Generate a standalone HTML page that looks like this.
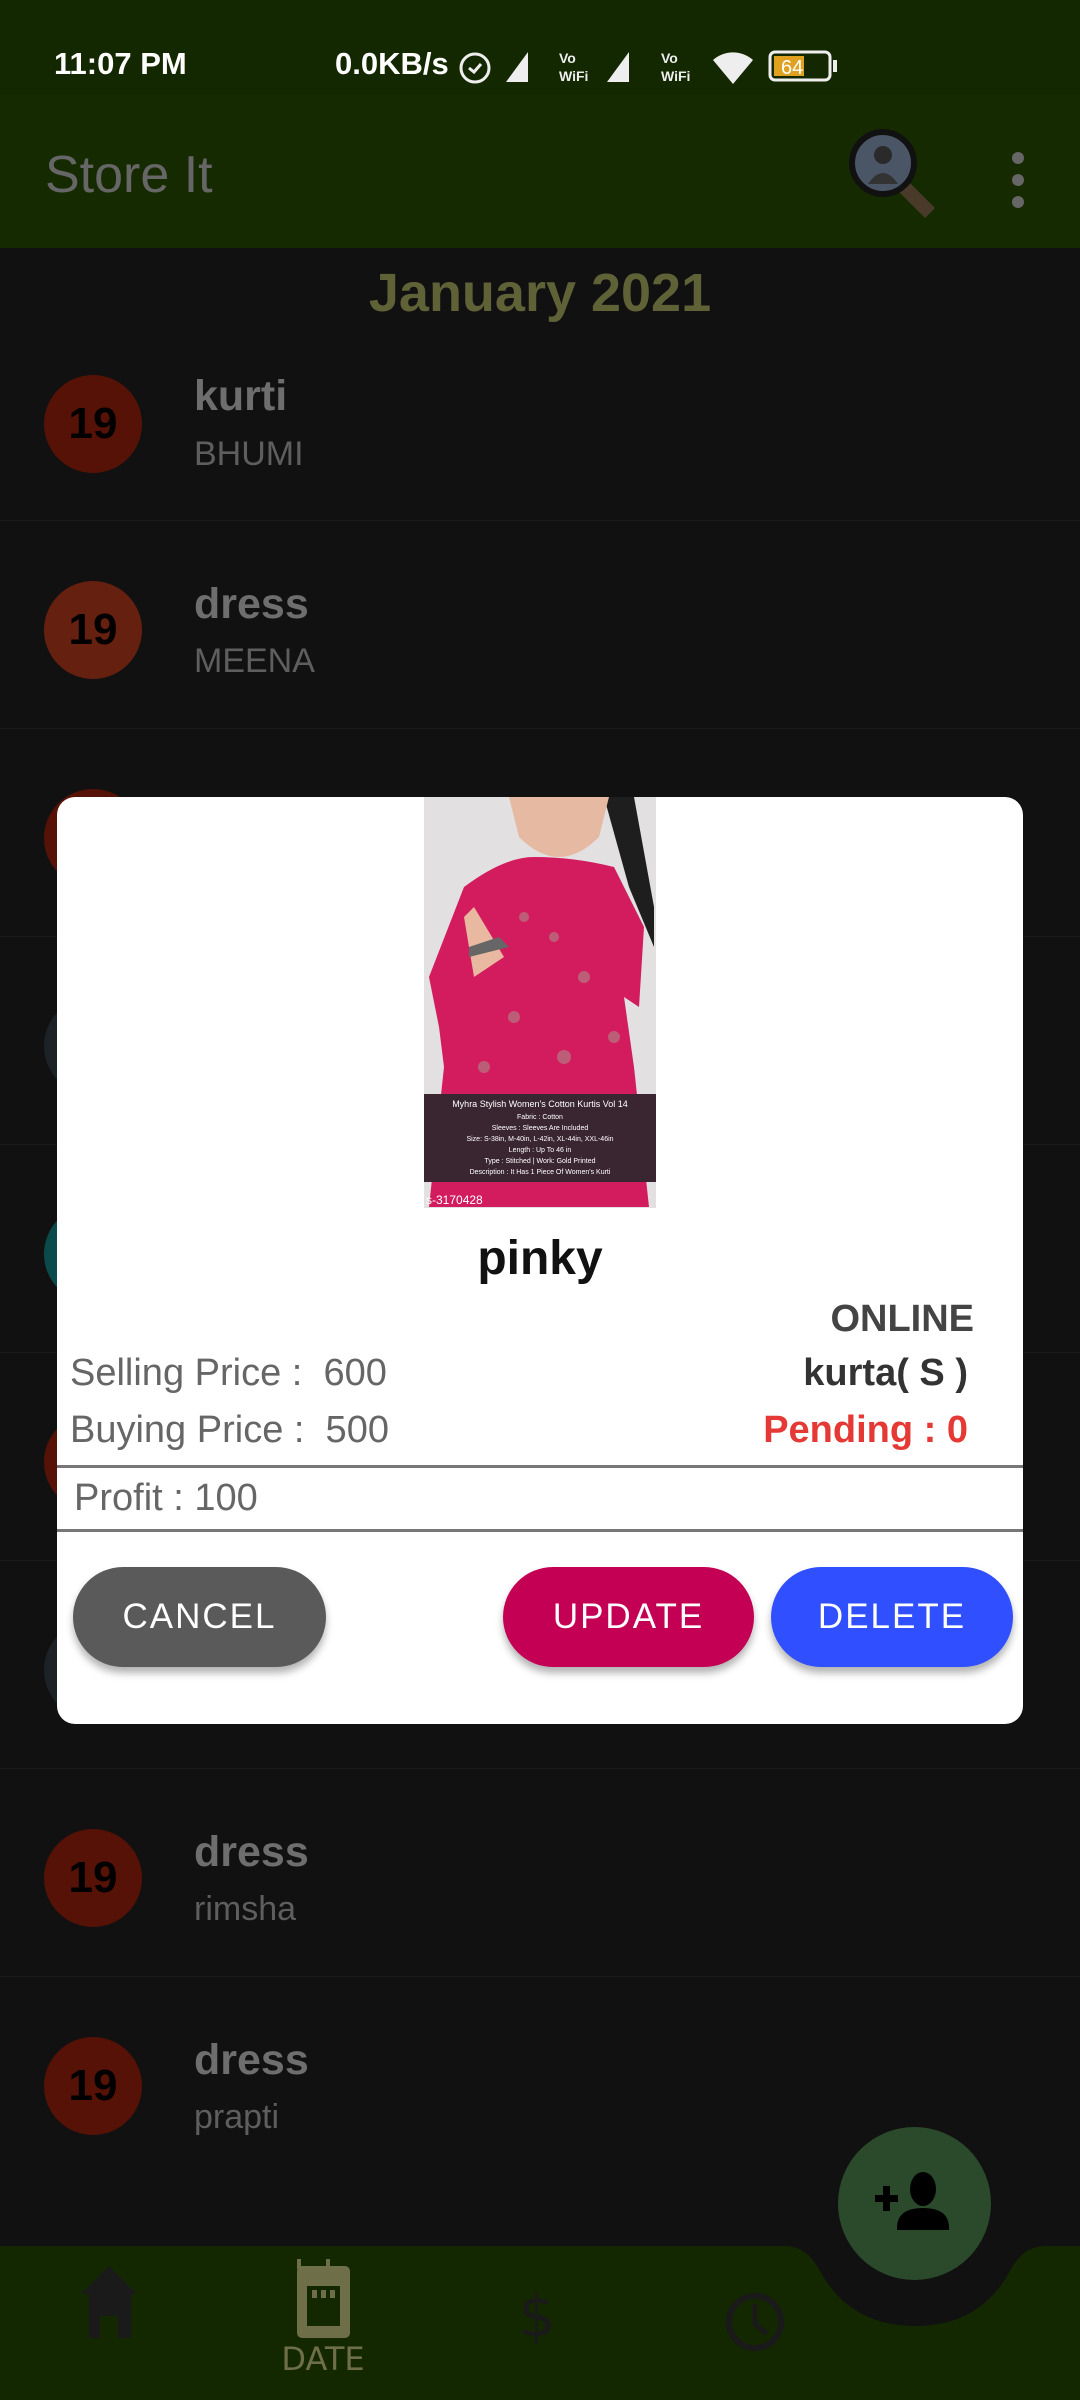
<!DOCTYPE html>
<html><head><meta charset="utf-8"><style>
*{margin:0;padding:0;box-sizing:border-box}
body{width:1080px;height:2400px;background:#111;position:relative;overflow:hidden;font-family:"Liberation Sans",Roboto,sans-serif}
.abs{position:absolute}
.status{left:0;top:0;width:1080px;height:95px;background:#142800}
.appbar{left:0;top:95px;width:1080px;height:153px;background:#162a00}
.circ{position:absolute;left:44px;width:98px;height:98px;border-radius:50%;background:#561206;color:#000;font-size:44px;font-weight:bold;text-align:center;line-height:98px}
.t1{position:absolute;left:194px;font-size:43px;font-weight:bold;color:#6e6e6e}
.t2{position:absolute;left:194px;font-size:34px;color:#5e5e5e}
.sep{position:absolute;left:0;width:1080px;height:1px;background:#1a1a1a}
.dlg{left:57px;top:797px;width:966px;height:927px;background:#fff;border-radius:18px;overflow:hidden}
.btn{position:absolute;top:770px;height:100px;border-radius:50px;color:#fff;font-size:35px;letter-spacing:2px;text-align:center;line-height:100px;box-shadow:0 6px 8px rgba(0,0,0,.3)}
</style></head><body>
<div class="abs status"></div>
<div class="abs" style="left:54px;top:46px;color:#fff;font-size:31px;font-weight:bold">11:07 PM</div>
<div class="abs" style="left:335px;top:46px;color:#fff;font-size:31px;font-weight:bold">0.0KB/s</div>
<svg class="abs" style="left:455px;top:46px" width="390" height="40" viewBox="0 0 390 40">
<circle cx="20" cy="22" r="14" fill="none" stroke="#eee" stroke-width="3"/><path d="M14 22l5 4 7-8" stroke="#eee" stroke-width="3" fill="none"/>
<path d="M51 36h22V6z" fill="#eee"/>
<text x="104" y="17" font-size="14" fill="#eee" font-family="Liberation Sans" font-weight="bold">Vo</text><text x="104" y="35" font-size="14" fill="#eee" font-family="Liberation Sans" font-weight="bold">WiFi</text>
<path d="M152 36h22V6z" fill="#eee"/>
<text x="206" y="17" font-size="14" fill="#eee" font-family="Liberation Sans" font-weight="bold">Vo</text><text x="206" y="35" font-size="14" fill="#eee" font-family="Liberation Sans" font-weight="bold">WiFi</text>
<path d="M258 14a30 30 0 0 1 40 0l-20 24z" fill="#eee"/>
<rect x="315" y="6" width="60" height="28" rx="5" fill="none" stroke="#eee" stroke-width="3"/><rect x="319" y="10" width="30" height="20" fill="#e0a020"/><text x="326" y="28" font-size="20" fill="#fff" font-family="Liberation Sans">64</text><rect x="378" y="14" width="4" height="12" fill="#eee"/>
</svg>
<div class="abs appbar"></div>
<div class="abs" style="left:45px;top:145px;color:#666;font-size:52px">Store It</div>
<svg class="abs" style="left:848px;top:128px" width="92" height="90" viewBox="0 0 92 90">
<line x1="55" y1="58" x2="82" y2="85" stroke="#4a3a2a" stroke-width="14"/>
<circle cx="35" cy="35" r="31" fill="#4a5566" stroke="#111" stroke-width="6"/>
<circle cx="35" cy="27" r="9" fill="#2a2a2a"/><path d="M20 56q15-22 30 0z" fill="#333"/>
</svg>
<div class="abs" style="left:1012px;top:152px;width:12px;height:12px;border-radius:50%;background:#666;box-shadow:0 22px 0 #666,0 44px 0 #666"></div>

<div class="abs" style="left:0;top:262px;width:1080px;text-align:center;font-size:54px;font-weight:bold;color:#5f6136">January 2021</div>

<div class="circ" style="top:375px">19</div><div class="t1" style="top:372px">kurti</div><div class="t2" style="top:435px">BHUMI</div>
<div class="sep" style="top:520px"></div>
<div class="circ" style="top:581px;background:#66200f">19</div><div class="t1" style="top:580px">dress</div><div class="t2" style="top:642px">MEENA</div>
<div class="sep" style="top:728px"></div>
<div class="circ" style="top:789px"></div>
<div class="sep" style="top:936px"></div>
<div class="circ" style="top:997px;background:#1c2226"></div>
<div class="sep" style="top:1144px"></div>
<div class="circ" style="top:1205px;background:#0b4a4a"></div>
<div class="sep" style="top:1352px"></div>
<div class="circ" style="top:1413px"></div>
<div class="sep" style="top:1560px"></div>
<div class="circ" style="top:1621px;background:#1c2226"></div>
<div class="sep" style="top:1768px"></div>
<div class="circ" style="top:1829px">19</div><div class="t1" style="top:1828px">dress</div><div class="t2" style="top:1890px">rimsha</div>
<div class="sep" style="top:1976px"></div>
<div class="circ" style="top:2037px">19</div><div class="t1" style="top:2036px">dress</div><div class="t2" style="top:2098px">prapti</div>

<div class="abs dlg">
<svg style="position:absolute;left:367px;top:0" width="232" height="411" viewBox="0 0 232 411">
<rect width="232" height="411" fill="#e2e0e0"/>
<path d="M70 0h30l10 40 40 30 35-20 10-50h25l12 80 0 330H0z" fill="#1e1e1e" opacity="0"/>
<path d="M180 0h30l20 110v40l-25-60z" fill="#1e1e1e"/>
<path d="M85 0h100l-10 40q-40 40-80 0z" fill="#e6b9a2"/>
<path d="M40 90q40-30 70-30 40 0 80 10l30 60-5 80-15 -10 10 70 15 140H5l15-140-5-40-10-50z" fill="#d31c5e"/>
<path d="M40 120l10 60 30-20 -30-50z" fill="#e8b8a0"/>
<path d="M45 150l30-10 10 10-40 10z" fill="#666"/>
<g fill="#b08a8a" opacity=".6"><circle cx="100" cy="120" r="5"/><circle cx="130" cy="140" r="5"/><circle cx="160" cy="180" r="6"/><circle cx="90" cy="220" r="6"/><circle cx="140" cy="260" r="7"/><circle cx="190" cy="240" r="6"/><circle cx="60" cy="270" r="6"/></g>
<rect x="0" y="297" width="232" height="88" fill="#3a2630"/>
<text x="116" y="310" font-size="9" fill="#fff" text-anchor="middle" font-family="Liberation Sans">Myhra Stylish Women's Cotton Kurtis Vol 14</text>
<text x="116" y="322" font-size="7" fill="#fff" text-anchor="middle" font-family="Liberation Sans">Fabric : Cotton</text>
<text x="116" y="333" font-size="7" fill="#fff" text-anchor="middle" font-family="Liberation Sans">Sleeves : Sleeves Are Included</text>
<text x="116" y="344" font-size="7" fill="#fff" text-anchor="middle" font-family="Liberation Sans">Size: S-38in, M-40in, L-42in, XL-44in, XXL-46in</text>
<text x="116" y="355" font-size="7" fill="#fff" text-anchor="middle" font-family="Liberation Sans">Length : Up To 46 in</text>
<text x="116" y="366" font-size="7" fill="#fff" text-anchor="middle" font-family="Liberation Sans">Type : Stitched | Work: Gold Printed</text>
<text x="116" y="377" font-size="7" fill="#fff" text-anchor="middle" font-family="Liberation Sans">Description : It Has 1 Piece Of Women's Kurti</text>
<text x="2" y="407" font-size="12" fill="#fff" font-family="Liberation Sans">s-3170428</text>
</svg>
<div style="position:absolute;left:0;top:434px;width:966px;text-align:center;font-size:48px;font-weight:bold;color:#111">pinky</div>
<div style="position:absolute;right:49px;top:501px;font-size:38px;font-weight:bold;color:#444">ONLINE</div>
<div style="position:absolute;left:13px;top:555px;font-size:38px;color:#666">Selling Price :&nbsp; 600</div>
<div style="position:absolute;right:55px;top:555px;font-size:38px;font-weight:bold;color:#333">kurta( S )</div>
<div style="position:absolute;left:13px;top:612px;font-size:38px;color:#666">Buying Price :&nbsp; 500</div>
<div style="position:absolute;right:55px;top:612px;font-size:38px;font-weight:bold;color:#e53935">Pending : 0</div>
<div style="position:absolute;left:0;top:668px;width:966px;height:3px;background:#777"></div>
<div style="position:absolute;left:17px;top:680px;font-size:38px;color:#666">Profit : 100</div>
<div style="position:absolute;left:0;top:732px;width:966px;height:3px;background:#777"></div>
<div class="btn" style="left:16px;width:253px;background:#5a5a5a">CANCEL</div>
<div class="btn" style="left:446px;width:251px;background:#c40055">UPDATE</div>
<div class="btn" style="left:714px;width:242px;background:#304ffe">DELETE</div>
</div>

<svg class="abs" style="left:0;top:2246px" width="1080" height="154" viewBox="0 0 1080 154">
<path d="M0 0H785q22 0 35 25 30 55 95 55 65 0 95-55 13-25 35-25H1080V154H0z" fill="#142800"/>
<path d="M78 38l28-28 28 28h-6v44h-13V60h-18v22H86V38z" fill="#1a1a1a" transform="translate(3,10)"/>
<g fill="#6e6e48"><rect x="297" y="13" width="4" height="10"/><rect x="326" y="13" width="4" height="10"/><rect x="297" y="20" width="53" height="72" rx="5"/></g>
<rect x="307" y="40" width="33" height="40" fill="#142800"/><g fill="#6e6e48"><rect x="312" y="44" width="5" height="8"/><rect x="321" y="44" width="5" height="8"/><rect x="330" y="44" width="5" height="8"/></g>
<text x="537" y="90" font-size="58" fill="#1a1a1a" text-anchor="middle" font-family="DejaVu Sans">$</text>
<circle cx="755" cy="76" r="26" fill="none" stroke="#1a1a1a" stroke-width="6"/><path d="M755 58v20l12 10" stroke="#1a1a1a" stroke-width="5" fill="none"/>
<text x="323" y="124" font-size="32" fill="#6e6e48" text-anchor="middle" font-family="DejaVu Sans">DATE</text>
</svg>
<div class="abs" style="left:838px;top:2127px;width:153px;height:153px;border-radius:50%;background:#2b4a2b"></div>
<svg class="abs" style="left:875px;top:2155px" width="80" height="100" viewBox="0 0 80 100">
<rect x="0" y="40" width="23" height="7" fill="#000"/><rect x="8" y="31" width="7" height="25" fill="#000"/>
<ellipse cx="48" cy="34" rx="13" ry="17" fill="#000"/>
<path d="M22 73q0-20 26-20 26 0 26 20v2H22z" fill="#000"/>
</svg>
</body></html>
